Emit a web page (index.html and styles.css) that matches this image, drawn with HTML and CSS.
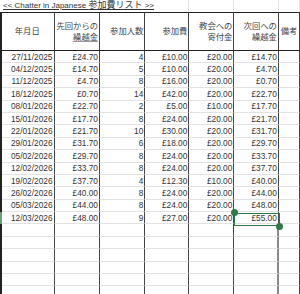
FILE: index.html
```html
<!DOCTYPE html>
<html lang="ja">
<head>
    <meta charset="UTF-8">
    <meta name="viewport" content="width=device-width, initial-scale=1.0">
    <title>参加費リスト</title>
    <link rel="stylesheet" href="styles.css">
</head>
<body>

<div class="sheet">
    <!-- title row -->
    <div class="row title-row">
        <div class="title">&lt;&lt; Chatter in Japanese <span class="jp">参加費リスト</span> &gt;&gt;</div>
        <div class="cell"></div>
        <div class="cell"></div>
        <div class="cell"></div>
    </div>

    <!-- header row -->
    <div class="row head-row">
        <div class="cell center"><span>年月日</span></div>
        <div class="cell"><span>先回からの<br><span class="uline">繰越金</span></span></div>
        <div class="cell"><span>参加人数</span></div>
        <div class="cell"><span>参加費</span></div>
        <div class="cell"><span>教会への<br>寄付金</span></div>
        <div class="cell"><span>次回への<br>繰越金</span></div>
        <div class="cell left"><span>備考</span></div>
    </div>

    <div class="row"><div class="cell">27/11/2025</div><div class="cell">£24.70</div><div class="cell">4</div><div class="cell">£10.00</div><div class="cell">£20.00</div><div class="cell">£14.70</div><div class="cell"></div></div>
    <div class="row"><div class="cell">04/12/2025</div><div class="cell">£14.70</div><div class="cell">5</div><div class="cell">£10.00</div><div class="cell">£20.00</div><div class="cell">£4.70</div><div class="cell"></div></div>
    <div class="row"><div class="cell">11/12/2025</div><div class="cell">£4.70</div><div class="cell">8</div><div class="cell">£16.00</div><div class="cell">£20.00</div><div class="cell">£0.70</div><div class="cell"></div></div>
    <div class="row"><div class="cell">18/12/2025</div><div class="cell">£0.70</div><div class="cell">14</div><div class="cell">£42.00</div><div class="cell">£20.00</div><div class="cell">£22.70</div><div class="cell"></div></div>
    <div class="row"><div class="cell">08/01/2026</div><div class="cell">£22.70</div><div class="cell">2</div><div class="cell">£5.00</div><div class="cell">£10.00</div><div class="cell">£17.70</div><div class="cell"></div></div>
    <div class="row"><div class="cell">15/01/2026</div><div class="cell">£17.70</div><div class="cell">8</div><div class="cell">£24.00</div><div class="cell">£20.00</div><div class="cell">£21.70</div><div class="cell"></div></div>
    <div class="row"><div class="cell">22/01/2026</div><div class="cell">£21.70</div><div class="cell">10</div><div class="cell">£30.00</div><div class="cell">£20.00</div><div class="cell">£31.70</div><div class="cell"></div></div>
    <div class="row"><div class="cell">29/01/2026</div><div class="cell">£31.70</div><div class="cell">6</div><div class="cell">£18.00</div><div class="cell">£20.00</div><div class="cell">£29.70</div><div class="cell"></div></div>
    <div class="row"><div class="cell">05/02/2026</div><div class="cell">£29.70</div><div class="cell">8</div><div class="cell">£24.00</div><div class="cell">£20.00</div><div class="cell">£33.70</div><div class="cell"></div></div>
    <div class="row"><div class="cell">12/02/2026</div><div class="cell">£33.70</div><div class="cell">8</div><div class="cell">£24.00</div><div class="cell">£20.00</div><div class="cell">£37.70</div><div class="cell"></div></div>
    <div class="row"><div class="cell">19/02/2026</div><div class="cell">£37.70</div><div class="cell">4</div><div class="cell">£12.30</div><div class="cell">£10.00</div><div class="cell">£40.00</div><div class="cell"></div></div>
    <div class="row"><div class="cell">26/02/2026</div><div class="cell">£40.00</div><div class="cell">8</div><div class="cell">£24.00</div><div class="cell">£20.00</div><div class="cell">£44.00</div><div class="cell"></div></div>
    <div class="row"><div class="cell">05/03/2026</div><div class="cell">£44.00</div><div class="cell">8</div><div class="cell">£24.00</div><div class="cell">£20.00</div><div class="cell">£48.00</div><div class="cell"></div></div>
    <div class="row sel"><div class="cell">12/03/2026</div><div class="cell">£48.00</div><div class="cell">9</div><div class="cell">£27.00</div><div class="cell">£20.00</div><div class="cell">£55.00</div><div class="cell"></div></div>

    <!-- empty rows -->
    <div class="row empty"><div class="cell"></div><div class="cell"></div><div class="cell"></div><div class="cell"></div><div class="cell"></div><div class="cell"></div><div class="cell"></div></div>
    <div class="row empty"><div class="cell"></div><div class="cell"></div><div class="cell"></div><div class="cell"></div><div class="cell"></div><div class="cell"></div><div class="cell"></div></div>
    <div class="row empty"><div class="cell"></div><div class="cell"></div><div class="cell"></div><div class="cell"></div><div class="cell"></div><div class="cell"></div><div class="cell"></div></div>
    <div class="row empty"><div class="cell"></div><div class="cell"></div><div class="cell"></div><div class="cell"></div><div class="cell"></div><div class="cell"></div><div class="cell"></div></div>
    <div class="row empty"><div class="cell"></div><div class="cell"></div><div class="cell"></div><div class="cell"></div><div class="cell"></div><div class="cell"></div><div class="cell"></div></div>
    <div class="row empty"><div class="cell"></div><div class="cell"></div><div class="cell"></div><div class="cell"></div><div class="cell"></div><div class="cell"></div><div class="cell"></div></div>

    <!-- selected cell -->
    <div class="selection">
        <span class="handle top"></span>
        <span class="handle bottom"></span>
    </div>
</div>

</body>
</html>
```
FILE: styles.css
```css
body {
    margin: 0;
    background-color: #fff;
    font-family: "Liberation Sans", "Noto Sans CJK JP", sans-serif;
    color: #333;
    overflow: hidden;
}
.sheet {
    position: relative;
    width: 300px;
    --cols: 2px 52.5px 45.5px 45.3px 44px 45px 44.5px 1fr;
}
.row {
    display: grid;
    grid-template-columns: var(--cols);
    height: 12.4px;
    font-size: 8.3px;
}
.row::before {
    content: "";
    background-color: #222;
}
.row.sel::before {
    background-color: #6a9e78;
}
.cell {
    box-sizing: border-box;
    min-width: 0;
    border-right: 1px solid #444;
    border-bottom: 1px solid #e2e2e2;
    display: flex;
    align-items: center;
    justify-content: flex-end;
    text-align: right;
    padding-right: 1px;
    white-space: nowrap;
    overflow: hidden;
}
.empty .cell:nth-child(6) {
    border-right: 2px solid #888;
}

/* title row */
.title-row {
    height: 12px;
}
.title-row::before {
    background-color: transparent;
}
.title-row .cell {
    border-right-color: #e4e4e4;
    border-bottom: none;
}
.title {
    grid-column: 2 / 6;
    box-sizing: border-box;
    border-right: 1px solid #e4e4e4;
    padding-left: 1px;
    font-size: 8px;
    line-height: 11px;
    text-decoration: underline;
    white-space: nowrap;
    color: #333;
}
.title .jp {
    font-size: 9px;
}

/* header row */
.head-row {
    height: 39px;
    color: #444;
}
.head-row .cell {
    border-top: 1px solid #222;
    border-bottom: 1px solid #222;
    line-height: 11px;
}
.head-row .cell > span {
    display: block;
}
.head-row .center {
    justify-content: center;
    text-align: center;
}
.head-row .left {
    justify-content: flex-start;
    padding-left: 2px;
}
.uline {
    text-decoration: underline;
    text-decoration-color: #999;
}

/* selected cell */
.selection {
    position: absolute;
    left: 234px;
    top: 212.6px;
    width: 45.5px;
    height: 13.6px;
    box-sizing: border-box;
    border: 1.5px solid #2f7a4b;
}
.handle {
    position: absolute;
    width: 7px;
    height: 7px;
    border-radius: 50%;
    background-color: #2f7a4b;
}
.handle.top {
    left: -4.5px;
    top: -4.5px;
}
.handle.bottom {
    right: -4.5px;
    bottom: -4.5px;
}
```
